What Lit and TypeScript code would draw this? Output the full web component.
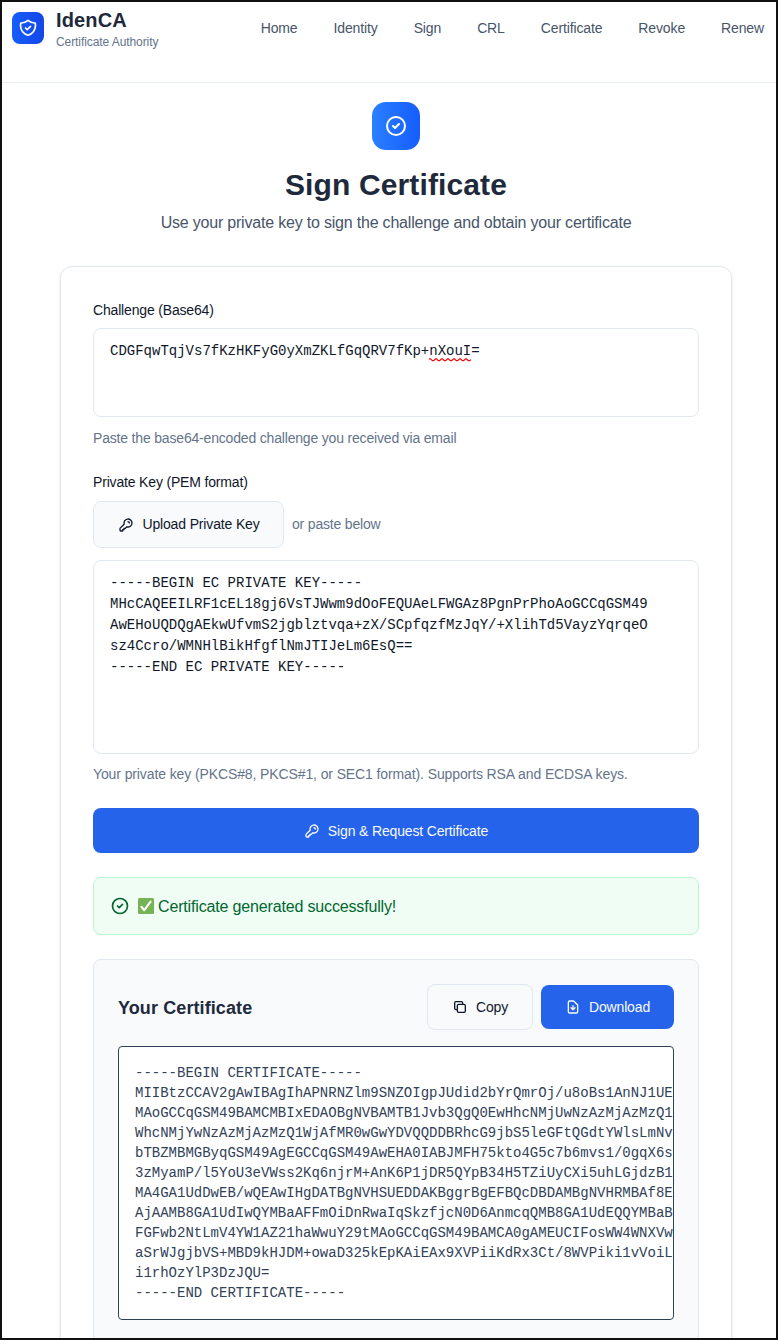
import { LitElement, html, css, svg } from "lit";
import { customElement } from "lit/decorators.js";

const PATHS = {
  shield:
    "M9 12l2 2 4-4m5.618-4.016A11.955 11.955 0 0112 2.944a11.955 11.955 0 01-8.618 3.04A12.02 12.02 0 003 9c0 5.591 3.824 10.29 9 11.622 5.176-1.332 9-6.03 9-11.622 0-1.042-.133-2.052-.382-3.016z",
  check: "M9 12l2 2 4-4m6 2a9 9 0 11-18 0 9 9 0 0118 0z",
  key: "M15 7a2 2 0 012 2m4 0a6 6 0 01-7.743 5.743L11 17H9v2H7v2H4a1 1 0 01-1-1v-2.586a1 1 0 01.293-.707l5.964-5.964A6 6 0 1121 9z",
  copy: "M8 16H6a2 2 0 01-2-2V6a2 2 0 012-2h8a2 2 0 012 2v2m-6 12h8a2 2 0 002-2v-8a2 2 0 00-2-2h-8a2 2 0 00-2 2v8a2 2 0 002 2z",
  download:
    "M12 10v6m0 0l-3-3m3 3l3-3m2 8H7a2 2 0 01-2-2V5a2 2 0 012-2h5.586a1 1 0 01.707.293l5.414 5.414a1 1 0 01.293.707V19a2 2 0 01-2 2z",
};

const icon = (name: keyof typeof PATHS, size: number) => html`
  <svg class="icon" width=${size} height=${size} viewBox="0 0 24 24" fill="none" stroke="currentColor"
    stroke-width="2" stroke-linecap="round" stroke-linejoin="round">${svg`<path d=${PATHS[name]}></path>`}</svg>`;

const NAV = ["Home", "Identity", "Sign", "CRL", "Certificate", "Revoke", "Renew"];

const PRIVATE_KEY = [
  "-----BEGIN EC PRIVATE KEY-----",
  "MHcCAQEEILRF1cEL18gj6VsTJWwm9dOoFEQUAeLFWGAz8PgnPrPhoAoGCCqGSM49",
  "AwEHoUQDQgAEkwUfvmS2jgblztvqa+zX/SCpfqzfMzJqY/+XlihTd5VayzYqrqeO",
  "sz4Ccro/WMNHlBikHfgflNmJTIJeLm6EsQ==",
  "-----END EC PRIVATE KEY-----",
].join("\n");

const CERTIFICATE = [
  "-----BEGIN CERTIFICATE-----",
  "MIIBtzCCAV2gAwIBAgIhAPNRNZlm9SNZOIgpJUdid2bYrQmrOj/u8oBs1AnNJ1UE",
  "MAoGCCqGSM49BAMCMBIxEDAOBgNVBAMTB1Jvb3QgQ0EwHhcNMjUwNzAzMjAzMzQ1",
  "WhcNMjYwNzAzMjAzMzQ1WjAfMR0wGwYDVQQDDBRhcG9jbS5leGFtQGdtYWlsLmNv",
  "bTBZMBMGByqGSM49AgEGCCqGSM49AwEHA0IABJMFH75kto4G5c7b6mvs1/0gqX6s",
  "3zMyamP/l5YoU3eVWss2Kq6njrM+AnK6P1jDR5QYpB34H5TZiUyCXi5uhLGjdzB1",
  "MA4GA1UdDwEB/wQEAwIHgDATBgNVHSUEDDAKBggrBgEFBQcDBDAMBgNVHRMBAf8E",
  "AjAAMB8GA1UdIwQYMBaAFFmOiDnRwaIqSkzfjcN0D6AnmcqQMB8GA1UdEQQYMBaB",
  "FGFwb2NtLmV4YW1AZ21haWwuY29tMAoGCCqGSM49BAMCA0gAMEUCIFosWW4WNXVw",
  "aSrWJgjbVS+MBD9kHJDM+owaD325kEpKAiEAx9XVPiiKdRx3Ct/8WVPiki1vVoiL",
  "i1rhOzYlP3DzJQU=",
  "-----END CERTIFICATE-----",
].join("\n");

@customElement("app-root")
export class AppRoot extends LitElement {
  static styles = css`
    :host {
      display: block;
      box-sizing: border-box;
      width: 778px;
      height: 1340px;
      overflow: hidden;
      border: 2px solid #111;
      background: #fff;
      color: #0f172a;
      font-family: "Liberation Sans", Arial, sans-serif;
      font-size: 14px;
      line-height: 20px;
    }
    * { box-sizing: border-box; }
    .icon { display: block; flex: none; }
    header {
      display: flex;
      justify-content: space-between;
      align-items: flex-start;
      height: 81px;
      padding: 6px 12px 0 10px;
      border-bottom: 1px solid #e9edf5;
    }
    .brand { display: flex; gap: 12px; }
    .logo {
      display: grid;
      place-items: center;
      width: 32px;
      height: 32px;
      margin-top: 4px;
      border-radius: 8px;
      color: #fff;
      background: linear-gradient(90deg, #155dfc, #1447e6);
    }
    .name { font-size: 20px; line-height: 25px; font-weight: 700; color: #1e293b; letter-spacing: 0.15px; }
    .sub { font-size: 12px; line-height: 16px; margin-top: 1px; color: #64748b; letter-spacing: -0.08px; }
    nav { display: flex; gap: 36px; padding-top: 10px; color: #475569; letter-spacing: -0.13px; }
    main { width: 672px; margin-left: 58px; padding-top: 19px; }
    .hero { display: flex; flex-direction: column; align-items: center; height: 164px; }
    .badge {
      display: grid;
      place-items: center;
      width: 48px;
      height: 48px;
      border-radius: 14px;
      color: #fff;
      background: linear-gradient(90deg, #2b7fff, #155dfc);
    }
    h1 { margin: 17px 0 0; font-size: 30px; line-height: 36px; color: #1e293b; letter-spacing: 0.13px; }
    .lead { margin: 8px 0 0; font-size: 16px; line-height: 24px; color: #475569; letter-spacing: -0.2px; }
    .card {
      height: 1200px;
      border: 1px solid #e2e8f0;
      border-radius: 12px;
      padding: 33px 32px;
      box-shadow: 0 1px 3px rgba(0, 0, 0, 0.1), 0 1px 2px -1px rgba(0, 0, 0, 0.1);
    }
    .label { display: block; letter-spacing: -0.17px; }
    .mono {
      margin: 0;
      font-family: "Liberation Mono", monospace;
      font-size: 14px;
      line-height: 21px;
      white-space: pre;
    }
    .field { border: 1px solid #e2e8f0; border-radius: 8px; padding: 12px 16px; }
    .challenge { height: 89px; margin-top: 8px; }
    .key { height: 194px; margin-top: 12px; }
    .typo { position: relative; }
    .wave { position: absolute; left: 0; bottom: -3px; display: block; }
    .hint { color: #64748b; letter-spacing: -0.18px; }
    .hint-a { margin-top: 11px; }
    .hint-b { margin-top: 10px; letter-spacing: -0.11px; }
    .label-b { margin-top: 24px; }
    .upload { display: flex; align-items: center; gap: 8px; margin-top: 9px; }
    .upload span { padding-bottom: 2px; }
    .btn {
      display: flex;
      align-items: center;
      justify-content: center;
      gap: 8px;
      border: 1px solid #e2e8f0;
      border-radius: 8px;
      background: #f8fafc;
      letter-spacing: -0.15px;
    }
    .btn-upload { width: 191px; height: 47px; padding-left: 1px; }
    .primary { border: 0; background: #2563eb; color: #f8fafc; }
    .submit { height: 45px; margin-top: 24px; }
    .alert {
      display: flex;
      align-items: center;
      height: 58px;
      margin-top: 24px;
      padding: 0 16px;
      border: 1px solid #b9f8cf;
      border-radius: 8px;
      background: #f0fdf4;
      color: #016630;
      font-size: 16px;
    }
    .tick { display: block; margin: 0 4px 0 8px; }
    .done { padding-top: 2px; letter-spacing: -0.16px; }
    .result {
      margin-top: 24px;
      padding: 24px;
      height: 500px;
      border: 1px solid #e2e8f0;
      border-radius: 8px;
      background: #f8fafc;
    }
    .result-head { display: flex; align-items: center; gap: 8px; height: 46px; }
    h2 { flex: 1; margin: 0; padding-top: 2px; font-size: 18px; line-height: 28px; color: #1e293b; letter-spacing: 0.1px; }
    .btn-copy { width: 106px; height: 46px; }
    .btn-download { width: 133px; height: 44px; }
    .pem {
      height: 274px;
      margin-top: 16px;
      padding: 16px 0 16px 16px;
      border: 1px solid #314158;
      border-radius: 4px;
      background: #fff;
      color: #314158;
      line-height: 20px;
      overflow: hidden;
    }
  `;

  render() {
    return html`
      <header>
        <div class="brand">
          <div class="logo">${icon("shield", 20)}</div>
          <div>
            <div class="name">IdenCA</div>
            <div class="sub">Certificate Authority</div>
          </div>
        </div>
        <nav>${NAV.map((item) => html`<span>${item}</span>`)}</nav>
      </header>
      <main>
        <div class="hero">
          <div class="badge">${icon("check", 24)}</div>
          <h1>Sign Certificate</h1>
          <p class="lead">Use your private key to sign the challenge and obtain your certificate</p>
        </div>
        <section class="card">
          <div class="label">Challenge (Base64)</div>
          <div class="field mono challenge">CDGFqwTqjVs7fKzHKFyG0yXmZKLfGqQRV7fKp+<span class="typo">nXouI<svg class="wave" width="42" height="4" viewBox="0 0 42 4"><path d="M0 1Q1.5 1 2 2T4 3T6 1.5T8 1T10 3T12 1.5" fill="none" stroke="none"></path><path d="M0 .9L1.4 .9L3.4 2.7L4.6 2.7L6.6 .9L7.4 .9L9.4 2.7L10.6 2.7L12.6 .9L13.4 .9L15.4 2.7L16.6 2.7L18.6 .9L19.4 .9L21.4 2.7L22.6 2.7L24.6 .9L25.4 .9L27.4 2.7L28.6 2.7L30.6 .9L31.4 .9L33.4 2.7L34.6 2.7L36.6 .9L37.4 .9L39.4 2.7L40.6 2.7L42 1.6" fill="none" stroke="#f00" stroke-width="1.2"></path></svg></span>=</div>
          <div class="hint hint-a">Paste the base64-encoded challenge you received via email</div>
          <div class="label label-b">Private Key (PEM format)</div>
          <div class="upload">
            <div class="btn btn-upload">${icon("key", 16)}<span>Upload Private Key</span></div>
            <span class="hint">or paste below</span>
          </div>
          <div class="field mono key">${PRIVATE_KEY}</div>
          <div class="hint hint-b">Your private key (PKCS#8, PKCS#1, or SEC1 format). Supports RSA and ECDSA keys.</div>
          <div class="btn primary submit">${icon("key", 16)}<span>Sign &amp; Request Certificate</span></div>
          <div class="alert">
            ${icon("check", 20)}
            <svg class="tick" width="16" height="16" viewBox="0 0 16 16">
              <rect width="16" height="16" rx="1.5" fill="#77b255"></rect>
              <path d="M3.4 8.8L6.3 12.2L12.6 3.6" fill="none" stroke="#fff" stroke-width="2.1" stroke-linecap="round" stroke-linejoin="round"></path>
            </svg>
            <span class="done">Certificate generated successfully!</span>
          </div>
          <div class="result">
            <div class="result-head">
              <h2>Your Certificate</h2>
              <div class="btn btn-copy">${icon("copy", 16)}<span>Copy</span></div>
              <div class="btn primary btn-download">${icon("download", 16)}<span>Download</span></div>
            </div>
            <pre class="mono pem">${CERTIFICATE}</pre>
          </div>
        </section>
      </main>
    `;
  }
}
